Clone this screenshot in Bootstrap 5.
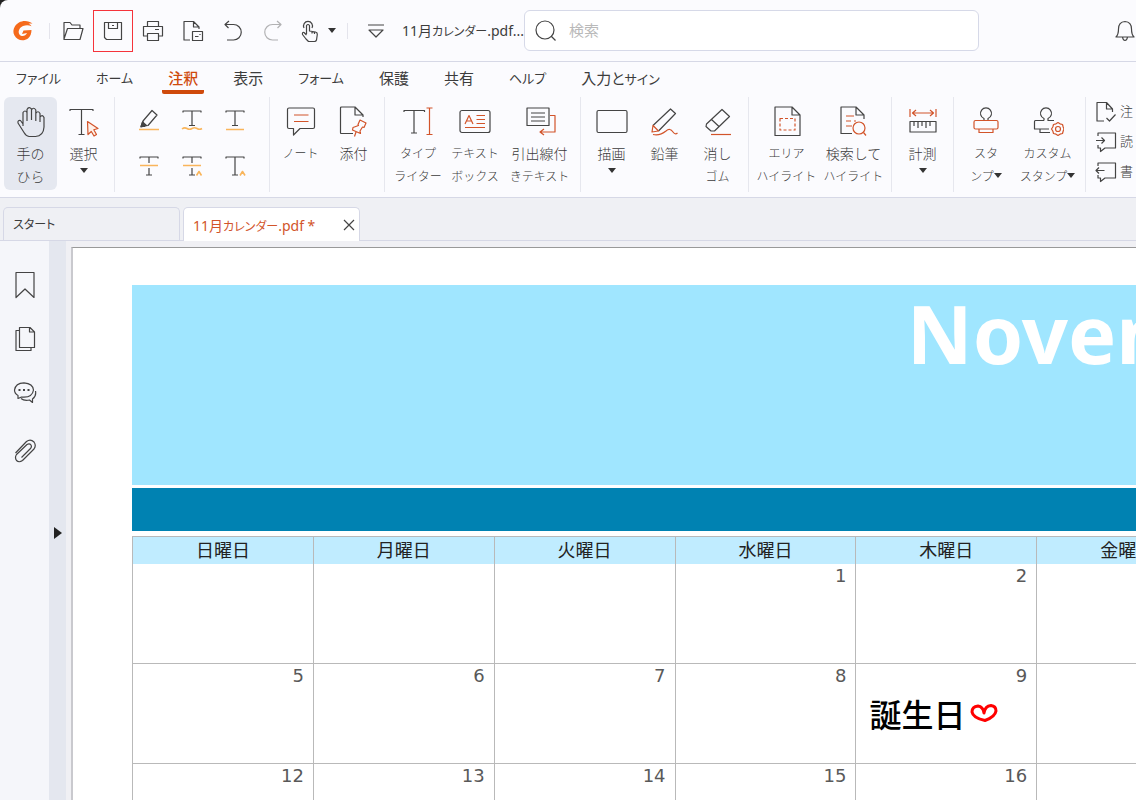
<!DOCTYPE html>
<html lang="ja">
<head>
<meta charset="utf-8">
<meta name="viewport" content="width=device-width, initial-scale=1">
<title>11月カレンダー.pdf</title>
<link href="https://cdn.jsdelivr.net/npm/bootstrap@5.3.0/dist/css/bootstrap.min.css" rel="stylesheet">
<style>
:root{--ink:#444;--accent:#d2542a;--amber:#f9b55b;--line:#d6d8e6}
body{background:#222;color:#3c3c3c;font-family:"Noto Sans","Noto Sans CJK JP",sans-serif;font-size:15px;font-feature-settings:"palt"}
.app{background:#fbfbfe;border-top-left-radius:8px}
svg{fill:none;stroke:var(--ink);stroke-width:1.2;stroke-linejoin:round;flex:none;display:block}
.o{stroke:var(--accent)}
.y{stroke:var(--amber);stroke-width:1.6}
.plain{background:none;border:0;padding:0;color:inherit;display:flex;align-items:center;justify-content:center}
.caret{width:0;height:0;border:4px solid transparent;border-top:5px solid #333;border-bottom:0;display:inline-block}
.kana{font-size:12px}
/* title bar */
.titlebar{height:62px;border-bottom:1px solid var(--line)}
.logo{width:46px}
.vsep{width:1px;height:16px;background:#e4e4ec;margin:0 3px}
.tool{width:40px;height:42px}
.tool.hot{border:1px solid #f5333b}
.tool.menu{width:50px;gap:8px}
.fname{width:122px;margin-left:6px}
.fname,.dtab{font-size:14px}
.finder{flex:0 1 455px;height:41px;border:1px solid #d6d9e8;border-radius:6px;background:#fff;padding:0 10px}
.finder input{border:0;outline:0;width:100%;margin-left:12px;padding:0;background:none}
.finder input::placeholder{color:#b9b9b9}
/* ribbon tabs */
.rtabs{height:34px;padding-left:16px;gap:35px}
.rtabs a{color:#3c3c3c;text-decoration:none;height:32px;line-height:24px;padding-top:4px;white-space:nowrap;border-bottom:4px solid transparent}
.rtabs .k{font-size:13px}
.rtabs a.on{color:#cf4a0c;font-weight:500;border-color:#cf4a0c;padding-left:6px;padding-right:6px;margin:0 -6px;border-radius:2px}
/* ribbon */
.ribbon{height:102px;border-bottom:1px solid var(--line);padding-top:1px}
.grp{display:flex;flex:none;height:95px;padding:0 4px;border-right:1px solid #e6e7ee}
.big{flex-direction:column;justify-content:flex-start;width:53px;height:93px;padding-top:8px;font-size:14px;font-weight:300;line-height:23px;white-space:nowrap;border-radius:6px;flex:none}
.big svg{margin-bottom:4px}
.big.on{background:#e5e8f0}
.big .drop{margin-top:3px}
.w56{width:56px}.w58{width:58px}.w67{width:67px}.w73{width:73px}
.marks{display:grid;grid-template-columns:repeat(3,43px);grid-auto-rows:46px;padding:0 9px 0 8px}
.rows{flex-direction:column;border:0;padding-left:9px}
.rows button{height:30px;gap:3px;font-size:13px;font-weight:300}
/* document tabs */
.dtabs{height:43px;background:#eff0f4;border-bottom:1px solid var(--line);padding:9px 3px 0;gap:3px}
.dtab{width:177px;height:34px;border:1px solid var(--line);border-bottom:0;border-radius:5px 5px 0 0;padding:0 4px 0 9px}
.dtab a{color:#3c3c3c;text-decoration:none}
.dtab.on{background:#fff;height:35px}
.dtab.on a{color:var(--accent)}
/* workspace */
.rail{width:49px;background:#f5f6fa;padding-top:17px}
.rail button{width:50px;height:54px}
.strip{width:17px;background:#e4e7ef;padding-top:24px}
.strip button{width:17px}
.tri{border:6px solid transparent;border-left:8px solid #222;border-right:0}
.canvas{background:#f0f0f4;padding:6px 0 0 5px}
.sheet{background:#fff;border-left:2px solid #c9c9ce;border-top:1px solid #999;padding:37px 0 0 59px;height:100%}
.docw{width:1267px;color:#595959}
.banner{height:200px;background:#a0e6ff;color:#fff;font-size:81px;font-weight:700;line-height:96px;text-align:right;padding-right:68px}
.bar{height:43px;margin:3px 0 5px;background:#0082b2}
.cal{table-layout:fixed;width:1267px;border-collapse:collapse;font-family:"DejaVu Sans","Noto Sans CJK JP",sans-serif;font-size:18px;line-height:24px;font-feature-settings:normal}
.cal th{background:#c0ecff;font-weight:400;color:#222;text-align:center;height:27px;padding:1px 0 0;border:solid #b9b9b9;border-width:1px 1px 0}
.cal td{height:100px;vertical-align:top;text-align:right;padding:0 9px 0 13px;border:solid #b9b9b9;border-width:0 1px 1px}
.ink{color:#000;font-family:"Noto Sans CJK JP",sans-serif;font-weight:500;font-size:32px;line-height:50px;gap:5px}
</style>
</head>
<body class="vh-100 overflow-hidden">
<div class="app vh-100 d-flex flex-column overflow-hidden">
<header class="titlebar d-flex align-items-center flex-shrink-0">
  <div class="logo d-flex justify-content-center"><svg width="22" height="22" viewBox="0 0 22 22"><path fill="#f56a1c" stroke="none" d="M20.500 3.500C17 .5 11 .2 7 2.500C2 5.400 0 11 2.500 15.500C5 20.500 11.500 21.800 16 18.500C18.500 16.500 19.500 13 19.500 10L11.500 10.500L10 14L15 13C13.500 16.500 9.500 17 7.500 14.500C5.500 11.500 7.500 7.500 11 6C14 4.800 17 5 19.500 6.200C18.500 4.800 17.500 4.200 16.500 3.800C18 3.300 19.500 3.300 20.500 3.500Z"/></svg></div>
  <div class="vsep"></div>
  <button class="plain tool" aria-label="開く"><svg width="22" height="20" viewBox="0 0 22 20"><path d="M2 18V1.500H8L10 4H18V7M2 18L5.500 7.500H21L18 18.500H2Z"/></svg></button>
  <button class="plain tool hot" aria-label="保存"><svg width="20" height="20" viewBox="0 0 20 20"><path d="M1.500 1.500H18.500V18.500H3.500L1.500 16.500ZM5.500 1.500V7.500H14.500V1.500M9 4.500H11"/></svg></button>
  <button class="plain tool" aria-label="印刷"><svg width="22" height="22" viewBox="0 0 22 22"><path d="M5.500 6V1.500H16.500V6M5 16H1.500V6.500H20.500V16H17M5.500 13.500H16.500V20.500H5.500ZM13 9.500H17"/></svg></button>
  <button class="plain tool" aria-label="変換"><svg width="22" height="22" viewBox="0 0 22 22"><path d="M8 20H2V1.500H11.500L17 7V9M11.500 1.500V7H17M10.500 11.500H20.500V20.500H10.500ZM13 16.500H16.500M18 14V15"/></svg></button>
  <button class="plain tool" aria-label="元に戻す"><svg width="20" height="22" viewBox="0 0 20 22"><path d="M6 1L2 4.500L5.500 8M2 4.500H10.500A7.500 7.500 0 0 1 10.500 20H4"/></svg></button>
  <button class="plain tool" aria-label="やり直し"><svg width="20" height="22" viewBox="0 0 20 22" stroke-opacity=".4"><path d="M14 1L18 4.500L14.500 8M18 4.500H9.500A7.500 7.500 0 0 0 9.500 20H15"/></svg></button>
  <button class="plain tool menu" aria-label="タッチモード"><svg width="20" height="24" viewBox="0 0 20 24"><path d="M6.500 15V6.500Q8 4.500 9.500 6.500V12L15.500 13Q17.500 13.500 17.300 15.500L16.500 21Q16 22.500 14.500 22.500H8.500L6 20L2.500 15.500Q2 13 4 13.500L6.500 16M12 12.500V14.500M14.500 13V15M4 9A4.500 4.500 0 1 1 12 9"/></svg><span class="caret"></span></button>
  <div class="vsep ms-1 me-2"></div>
  <button class="plain tool" aria-label="カスタマイズ"><svg width="18" height="18" viewBox="0 0 18 18"><path d="M1 3H17M2 8L9 15L16 8Z"/></svg></button>
  <div class="fname flex-shrink-0 text-nowrap">11月<span class="kana">カレンダー</span>.pdf...</div>
  <label class="finder d-flex align-items-center"><svg width="22" height="22" viewBox="0 0 22 22"><circle cx="10" cy="10" r="9"/><path d="M16 16L20.500 20.500"/></svg><input type="text" placeholder="検索" aria-label="検索"></label>
  <button class="plain ms-auto" aria-label="通知"><svg width="22" height="22" viewBox="0 0 22 22"><path d="M2 17Q4.500 14.500 4.500 9Q4.500 2 11 1.500Q17.500 2 17.500 9Q17.500 14.500 20 17ZM8.500 17Q9 20.500 11 20.500Q13 20.500 13.500 17"/></svg></button>
</header>

<nav class="rtabs d-flex flex-shrink-0">
  <a href="#" class="k">ファイル</a><a href="#" class="k">ホーム</a><a href="#" class="on">注釈</a><a href="#">表示</a><a href="#" class="k">フォーム</a><a href="#">保護</a><a href="#">共有</a><a href="#" class="k">ヘルプ</a><a href="#">入力と<span class="k">サイン</span></a>
</nav>

<div class="ribbon d-flex flex-shrink-0 overflow-hidden">
  <div class="grp">
    <button class="plain big on"><svg width="32" height="33" viewBox="0 0 32 33"><path d="M8 21V7.500Q10 4.500 12 7.500V16M12 7.500V4.500Q14 1 16.500 4V15M16.500 5Q18.500 1.500 20.800 5V16M20.800 8.500Q23 5 25 8.500V17M25 12Q27.500 9 29 12.500V22Q28.500 31 20.500 31.500H14Q11 31 9 27.500L3 18Q2.500 15 5.500 15.500L8 19"/></svg>手の<br>ひら</button>
    <button class="plain big"><svg width="32" height="33" viewBox="0 0 32 33"><path d="M2 6V4.500H25V6M13.500 4.500V29.500M10.500 29.500H16.500"/><path class="o" fill="#fff0e8" d="M19.500 16.500L30 23.500L25.800 24.800L28.500 29.500L26 31L23.300 26.500L20 29.500Z"/></svg>選択<span class="caret drop"></span></button>
  </div>
  <div class="grp"><div class="marks">
    <button class="plain" aria-label="蛍光ペン"><svg width="24" height="24" viewBox="0 0 24 24"><path d="M6 13L15 2.500L20 7L11 17.500L7 18ZM6 13L4 18.500H8"/><path fill="#444" d="M5.500 14L9.500 17.500L4 19Z"/><path class="y" d="M2 21.500H22"/></svg></button>
    <button class="plain" aria-label="波線"><svg width="24" height="24" viewBox="0 0 24 24"><path d="M3 4.500V3H21V4.500M12 3V17.500M9 17.500H15"/><path class="y" d="M2 21Q4.500 19 7 20.500T12 20.500T17 20.500T22 20.500"/></svg></button>
    <button class="plain" aria-label="下線"><svg width="24" height="24" viewBox="0 0 24 24"><path d="M3 4.500V3H21V4.500M12 3V17.500M9 17.500H15"/><path class="y" d="M3 21.500H21"/></svg></button>
    <button class="plain" aria-label="取り消し線"><svg width="24" height="24" viewBox="0 0 24 24"><path d="M3 4.500V3H21V4.500M12 3V9M12 14V21M9 21H15"/><path class="y" d="M3 11.500H21"/></svg></button>
    <button class="plain" aria-label="置換"><svg width="24" height="24" viewBox="0 0 24 24"><path d="M3 4.500V3H21V4.500M12 3V9M12 14V21M9 21H15"/><path class="y" d="M3 11.500H21M16.500 21.500L19 17.500L21.500 21.500"/></svg></button>
    <button class="plain" aria-label="挿入"><svg width="24" height="24" viewBox="0 0 24 24"><path d="M3 4.500V3H21V4.500M12 3V21M9 21H15"/><path class="y" d="M17 21.500L19.500 17.500L22 21.500"/></svg></button>
  </div></div>
  <div class="grp">
    <button class="plain big"><svg width="32" height="33" viewBox="0 0 32 33"><path d="M4 3H28Q29.500 3 29.500 4.500V22Q29.500 23.500 28 23.500H15L8.500 30V23.500H4Q2.500 23.500 2.500 22V4.500Q2.500 3 4 3Z"/><path class="o" d="M9 10H23.500M9 16.500H23.500"/></svg><span class="kana">ノート</span></button>
    <button class="plain big"><svg width="32" height="33" viewBox="0 0 32 33"><path d="M15 28.500H3Q2.500 28.500 2.500 27.500V3Q2.500 2 3.500 2H17L25 10V12M17 2V10H25"/><path class="o" d="M22 15L28 18L26 22.500L24.500 22L22 26L22.500 28.500L14.500 25L15 22.500L20.500 20.500L20 19.500ZM18 27L16.500 31.500"/></svg>添付</button>
  </div>
  <div class="grp">
    <button class="plain big w58"><svg width="32" height="33" viewBox="0 0 32 33"><path d="M2 7V5.500H22.500V7M12 5.500V28M9 28H15"/><path class="o" d="M24.500 3H30.500M24.500 29.500H30.500M27.500 3V29.500"/></svg><span class="kana">タイプ<br>ライター</span></button>
    <button class="plain big w56"><svg width="32" height="33" viewBox="0 0 32 33"><rect x="1" y="5.500" width="30" height="22" rx="2"/><path class="o" d="M6 19L10 10.500L14 19M7.500 16H12.500M17.500 10.500H26M17.500 14.500H26M17.500 18.500H26M6 22.500H26"/></svg><span class="kana">テキスト<br>ボックス</span></button>
    <button class="plain big w73"><svg width="32" height="33" viewBox="0 0 32 33"><path d="M3 3H25V20.500H3ZM7 8H21M7 12H21M7 16H21"/><path class="o" d="M26 10.500H31V27H16M20 24L16 27L20 30"/></svg>引出線付<span class="kana">きテキスト</span></button>
  </div>
  <div class="grp">
    <button class="plain big"><svg width="32" height="33" viewBox="0 0 32 33"><rect x="1" y="5.500" width="30" height="22" rx="1.500"/></svg>描画<span class="caret drop"></span></button>
    <button class="plain big"><svg width="32" height="33" viewBox="0 0 32 33"><path d="M4 20.500L21.500 4L26.500 8.500L9.500 26"/><path class="o" d="M4 20.500L3 27L9.500 26ZM4 29.500Q11 31 17 26Q21 22.500 24 27Q26 30 28.500 28"/></svg>鉛筆</button>
    <button class="plain big"><svg width="32" height="33" viewBox="0 0 32 33"><path d="M4.500 19L20 4.500L27.500 11.500L12.500 26H9L4 21.500ZM9.500 14.500L17 21.500"/><path class="o" d="M9 29.500H29"/></svg>消し<span class="kana">ゴム</span></button>
  </div>
  <div class="grp">
    <button class="plain big w67"><svg width="32" height="33" viewBox="0 0 32 33"><path d="M4 2H21L29 10V30.500H4ZM21 2V10H29"/><path class="o" stroke-dasharray="3 2" d="M9 13.500H24V25H9Z"/></svg><span class="kana">エリア<br>ハイライト</span></button>
    <button class="plain big w67"><svg width="32" height="33" viewBox="0 0 32 33"><path d="M14 28.500H3V2H18L26 10V14M18 2V10H26"/><path class="o" d="M8 11H16M8 16H13M16 16H18M8 21H14"/><circle class="o" cx="21" cy="23" r="6"/><path class="o" d="M25.500 27.500L28 30.500"/></svg>検索して<span class="kana">ハイライト</span></button>
  </div>
  <div class="grp">
    <button class="plain big"><svg width="32" height="33" viewBox="0 0 32 33"><path class="o" d="M3 4V12M29 4V12M5.500 8H26.500M9 5L5.500 8L9 11M23 5L26.500 8L23 11"/><path d="M3 16.500H29V27H3ZM7 16.500V21M11 16.500V23M15 16.500V21M19 16.500V23M23 16.500V21"/></svg>計測<span class="caret drop"></span></button>
  </div>
  <div class="grp">
    <button class="plain big w56"><svg width="32" height="33" viewBox="0 0 32 33"><path d="M14 15.500V13.500A5.500 5.500 0 1 1 18 13.500V15.500"/><path class="o" d="M5.500 15.500H26.500Q28 15.500 28 17V22.500Q28 24 26.500 24H5.500Q4 24 4 22.500V17Q4 15.500 5.500 15.500ZM9 24V27.500H23V24"/></svg><span class="kana">スタ<br>ンプ<span class="caret align-middle mb-1"></span></span></button>
    <button class="plain big w67"><svg width="32" height="33" viewBox="0 0 32 33"><path d="M12 15.500V13.500A5.500 5.500 0 1 1 16 13.500V15.500H22M12 15.500H3.500Q2.500 15.500 2.500 17V24H17M8 24V27.500H18"/><path class="o" d="M26 17.500L28 18.800L30.500 19.500L31.200 22L32 24L31.200 26L30.500 28.500L28 29.200L26 30.500L24 29.200L21.500 28.500L20.800 26L19.500 24L20.800 22L21.500 19.500L24 18.800Z"/><circle class="o" cx="26" cy="24" r="2.500"/></svg><span class="kana">カスタム<br>スタンプ<span class="caret align-middle mb-1"></span></span></button>
  </div>
  <div class="grp rows">
    <button class="plain"><svg width="22" height="22" viewBox="0 0 22 22"><path d="M9 20H2V1.500H11.500L17.500 8V11M11.500 1.500V8H17.500M11.500 17L14.500 20L20.500 13.500"/></svg>注</button>
    <button class="plain"><svg width="22" height="22" viewBox="0 0 22 22"><path d="M3 5V2H20.500V17H10L5.500 20.500V17H3V14M1 9.500H9.500M6.500 6.500L9.500 9.500L6.500 12.500"/></svg>読</button>
    <button class="plain"><svg width="22" height="22" viewBox="0 0 22 22"><path d="M3 5V2H20.500V17H10L5.500 20.500V17H3V14M1 9.500H9.500M4 6.500L1 9.500L4 12.500"/></svg>書</button>
  </div>
</div>

<div class="dtabs d-flex flex-shrink-0">
  <div class="dtab d-flex align-items-center"><a href="#" class="kana">スタート</a></div>
  <div class="dtab on d-flex align-items-center justify-content-between"><a href="#">11月<span class="kana">カレンダー</span>.pdf *</a><button class="plain" aria-label="閉じる"><svg width="12" height="12" viewBox="0 0 12 12"><path d="M1 1L11 11M11 1L1 11"/></svg></button></div>
</div>

<main class="d-flex flex-grow-1 overflow-hidden">
  <aside class="rail flex-shrink-0">
    <button class="plain" aria-label="しおり"><svg width="22" height="28" viewBox="0 0 22 28"><path d="M2 1.500H20V26.500L11 18L2 26.500Z"/></svg></button>
    <button class="plain" aria-label="ページ"><svg width="22" height="26" viewBox="0 0 22 26"><path d="M5.500 1.500H16L20.500 6V21.500H5.500ZM15.500 1.500V6H20.500M5.500 4.500H2V24.500H17V21.500"/></svg></button>
    <button class="plain" aria-label="コメント"><svg width="24" height="24" viewBox="0 0 24 24"><path d="M5 17.500V14.500Q1.500 12.500 1.500 9Q2.500 2 11 1.800Q20 2.500 20.500 9Q19.500 16 11 16.200H8ZM22.500 10Q23.500 15 19.500 18V21.500L16.500 19Q11 20 8 17.500"/><path stroke-width="2.200" d="M5.500 9H7.500M10 9H12M14.500 9H16.500"/></svg></button>
    <button class="plain mt-1" aria-label="添付ファイル"><svg width="24" height="26" viewBox="0 0 24 26"><path d="M2.500 15L13.500 3.500Q17.500 .5 21 4Q23.500 7.500 21 11L9.500 22.500Q6 25 3.500 22.500Q1.500 19.500 3.500 16.500L14 6.500Q16.500 5 18 7Q19 9 17.500 10.500L8.500 19.500"/></svg></button>
  </aside>
  <div class="strip flex-shrink-0 d-flex align-items-center"><button class="plain" aria-label="パネルを開く"><span class="tri"></span></button></div>
  <section class="canvas flex-grow-1 overflow-hidden">
    <div class="sheet overflow-hidden">
      <div class="docw">
        <div class="banner">November</div>
        <div class="bar"></div>
        <table class="cal">
          <thead><tr><th>日曜日</th><th>月曜日</th><th>火曜日</th><th>水曜日</th><th>木曜日</th><th>金曜日</th><th>土曜日</th></tr></thead>
          <tbody>
            <tr><td></td><td></td><td></td><td>1</td><td>2</td><td>3</td><td>4</td></tr>
            <tr><td>5</td><td>6</td><td>7</td><td>8</td><td>9<div class="ink d-flex align-items-center">誕生日<svg width="28" height="20" viewBox="0 0 28 20"><path stroke="#f00" stroke-width="3" d="M14 10Q13 3.500 8 3Q2 3.500 2 9Q3 15 15 17.500Q25 14 26 8Q26 3 21 2.500Q15 3 14 10Z"/></svg></div></td><td>10</td><td>11</td></tr>
            <tr><td>12</td><td>13</td><td>14</td><td>15</td><td>16</td><td>17</td><td>18</td></tr>
          </tbody>
        </table>
      </div>
    </div>
  </section>
</main>
</div>
<script src="https://cdn.jsdelivr.net/npm/bootstrap@5.3.0/dist/js/bootstrap.bundle.min.js"></script>
</body>
</html>
